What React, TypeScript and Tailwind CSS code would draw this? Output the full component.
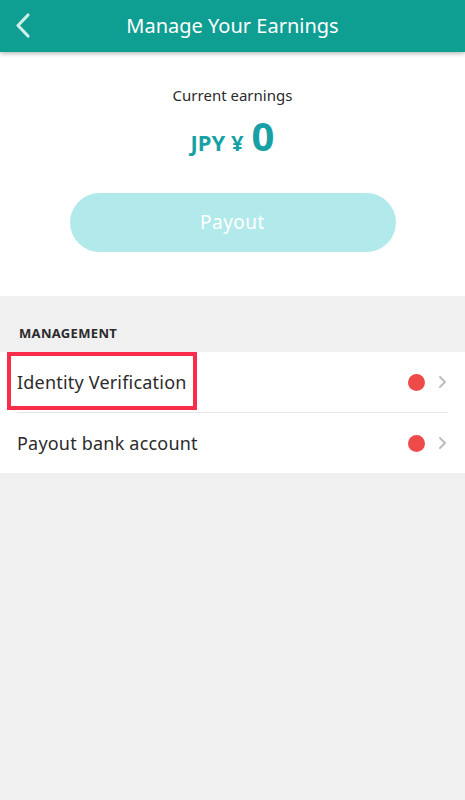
import React from "react";

function Chevron() {
  return (
    <svg width="9" height="14" viewBox="0 0 9 14" fill="none">
      <path d="M2 2l5 5-5 5" stroke="#bdbdbd" strokeWidth="2" strokeLinecap="round" strokeLinejoin="round" />
    </svg>
  );
}

function Row({ label, boxed, divider }: { label: string; boxed?: boolean; divider?: boolean }) {
  return (
    <div className="relative">
      <div className="flex items-center h-[60px] pl-[17px] pr-[18px]">
        <span className="text-[18px] text-[#2b2b2b] tracking-[0.2px]">{label}</span>
        <div className="ml-auto flex items-center gap-[13px]">
          <span className="w-[17px] h-[17px] rounded-full bg-[#ee4a4a]" />
          <Chevron />
        </div>
      </div>
      {divider && <div className="ml-[17px] mr-[17px] h-px bg-[#e4e4e4]" />}
      {boxed && (
        <div className="absolute left-[7px] top-0 w-[190px] h-[58px] border-[4px] border-[#fb2b4a]" />
      )}
    </div>
  );
}

export default function App() {
  return (
    <div className="w-[465px] h-[800px] bg-[#f0f0f0] flex flex-col" style={{ fontFamily: '"Noto Sans", "Open Sans", sans-serif' }}>
      <div className="relative h-[52px] bg-[#0f9e92] flex items-center justify-center shadow-[0_2px_4px_rgba(0,0,0,0.25)] z-10">
        <svg className="absolute left-[13px] top-[12px]" width="20" height="27" viewBox="0 0 20 27" fill="none">
          <path d="M15 3L5 13.5 15 24" stroke="#cdeeea" strokeWidth="3.2" strokeLinecap="round" strokeLinejoin="round" />
        </svg>
        <span className="text-white text-[20px]">Manage Your Earnings</span>
      </div>
      <div className="bg-white h-[244px] flex flex-col items-center">
        <div className="mt-[32px] text-[15px] text-[#2b2b2b] leading-[22px]">Current earnings</div>
        <div className="mt-[6px] flex items-baseline gap-[8px] text-[#17a1a6] font-bold">
          <span className="text-[22px]">JPY ¥</span>
          <span className="text-[40px] leading-[48px]">0</span>
        </div>
        <button className="mt-[33px] w-[326px] h-[59px] rounded-full bg-[#b2e9ea] text-white text-[19px] tracking-wide">
          Payout
        </button>
      </div>
      <div className="h-[56px] flex items-end pl-[19px] pb-[9px]">
        <span className="text-[13px] font-bold text-[#2b2b2b] tracking-wide">MANAGEMENT</span>
      </div>
      <div className="bg-white">
        <Row label="Identity Verification" boxed divider />
        <Row label="Payout bank account" />
      </div>
    </div>
  );
}
